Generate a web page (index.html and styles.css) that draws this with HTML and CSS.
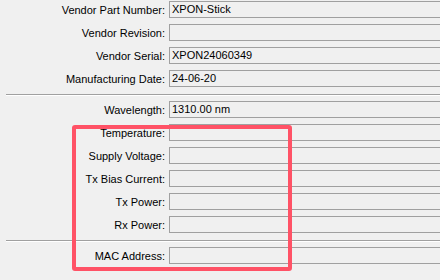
FILE: index.html
```html
<!DOCTYPE html>
<html lang="en">
<head>
  <meta charset="UTF-8" />
  <title>SFP Module Info</title>
  <link rel="stylesheet" href="styles.css">
</head>
<body>
  <div class="form">
    <div class="group">
      <div class="row"><label>Vendor Part Number:</label><div class="field">XPON-Stick</div></div>
      <div class="row"><label>Vendor Revision:</label><div class="field"></div></div>
      <div class="row"><label>Vendor Serial:</label><div class="field">XPON24060349</div></div>
      <div class="row"><label>Manufacturing Date:</label><div class="field">24-06-20</div></div>
    </div>

    <div class="separator"></div>

    <div class="group">
      <div class="row"><label>Wavelength:</label><div class="field">1310.00 nm</div></div>
      <div class="row"><label>Temperature:</label><div class="field"></div></div>
      <div class="row"><label>Supply Voltage:</label><div class="field"></div></div>
      <div class="row"><label>Tx Bias Current:</label><div class="field"></div></div>
      <div class="row"><label>Tx Power:</label><div class="field"></div></div>
      <div class="row"><label>Rx Power:</label><div class="field"></div></div>
    </div>

    <div class="separator"></div>

    <div class="group">
      <div class="row"><label>MAC Address:</label><div class="field"></div></div>
    </div>
  </div>

  <!-- highlight drawn over the empty monitoring fields -->
  <div class="highlight"></div>
</body>
</html>
```

FILE: styles.css
```css
html, body {
  margin: 0;
  height: 100%;
  overflow: hidden;
}

body {
  position: relative;
  background: #f0f0f0;
  color: #000;
  font-family: 'Liberation Sans', Arial, sans-serif;
  font-size: 11px;
}

.form {
  padding-top: 1px;
}

.group {
  display: flex;
  flex-direction: column;
  gap: 6px;
}

.row {
  display: grid;
  grid-template-columns: 169px 1fr;
  height: 17px;
  align-items: center;
}

.row label {
  text-align: right;
  padding-right: 4px;
  white-space: nowrap;
}

/* fields continue past the right edge of the window, so no right border */
.field {
  box-sizing: border-box;
  height: 17px;
  line-height: 15px;
  padding-left: 2px;
  border: 1px solid #a0a0a0;
  border-right: none;
  background: #f0f0f0;
  white-space: nowrap;
  overflow: hidden;
}

.separator {
  margin: 7px 0 5px 6px;
  border-top: 1px solid #a0a0a0;
  border-bottom: 1px solid #fff;
}

.highlight {
  position: absolute;
  left: 72px;
  top: 125px;
  width: 220px;
  height: 146px;
  box-sizing: border-box;
  border: 4px solid #ff5266;
  border-radius: 3px;
}
```
